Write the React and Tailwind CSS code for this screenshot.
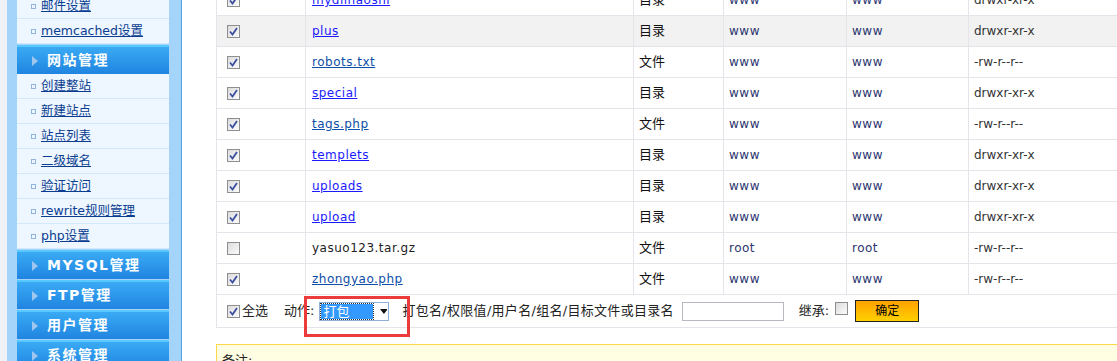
import React from 'react';

const cjk = { fontFamily: '"DejaVu Sans", "Noto Sans CJK SC", sans-serif' };

const Check = ({ checked = true }) => (
  <span className="inline-flex w-[13px] h-[13px] border border-[#8e8f8f] bg-gradient-to-br from-[#dcdcdc] to-[#fbfbfb] items-center justify-center shrink-0">
    {checked && (
      <svg width="9" height="9" viewBox="0 0 9 9">
        <path d="M1 4.5 L3.5 7.5 L8 1" fill="none" stroke="#3b4f9e" strokeWidth="1.8" />
      </svg>
    )}
  </span>
);

const SideItem = ({ label }) => (
  <div className="h-[25px] bg-[#eef6ff] border-b border-[#d4e8fc] flex items-center pl-[14px]">
    <span className="w-[5px] h-[5px] border border-[#8fb4e0] mr-[5px]" />
    <a href="#" className="text-[12.5px] text-[#0a3d8f] underline leading-none">{label}</a>
  </div>
);

const SideHead = ({ label }) => (
  <div className="mt-[1px] h-[29px] border-t-2 border-[#58c8ff] bg-gradient-to-b from-[#3aaaf4] to-[#2084e0] flex items-center pl-[15px]">
    <svg width="6" height="10" viewBox="0 0 6 10" className="mr-[9px]">
      <path d="M0 0 L6 5 L0 10 Z" fill="#9fc6ee" />
    </svg>
    <span className="text-white font-bold text-[14px] tracking-[1.5px]">{label}</span>
  </div>
);

const rows = [
  { name: 'mydiinaosni', type: '目录', u: 'www', g: 'www', p: 'drwxr-xr-x', dir: true },
  { name: 'plus', type: '目录', u: 'www', g: 'www', p: 'drwxr-xr-x', dir: true, hover: true },
  { name: 'robots.txt', type: '文件', u: 'www', g: 'www', p: '-rw-r--r--' },
  { name: 'special', type: '目录', u: 'www', g: 'www', p: 'drwxr-xr-x', dir: true },
  { name: 'tags.php', type: '文件', u: 'www', g: 'www', p: '-rw-r--r--' },
  { name: 'templets', type: '目录', u: 'www', g: 'www', p: 'drwxr-xr-x', dir: true },
  { name: 'uploads', type: '目录', u: 'www', g: 'www', p: 'drwxr-xr-x', dir: true },
  { name: 'upload', type: '目录', u: 'www', g: 'www', p: 'drwxr-xr-x', dir: true },
  { name: 'yasuo123.tar.gz', type: '文件', u: 'root', g: 'root', p: '-rw-r--r--', plain: true },
  { name: 'zhongyao.php', type: '文件', u: 'www', g: 'www', p: '-rw-r--r--' },
];

const cell = 'border-r border-[#e4e4ea] flex items-center';

export default function App() {
  return (
    <div className="flex h-[361px] w-[1117px] overflow-hidden bg-white text-[12px] text-[#222]" style={cjk}>
      {/* Sidebar */}
      <div className="w-[7px] shrink-0 bg-[#eef2f6]" />
      <div className="w-[175px] shrink-0 bg-[#a4d4fa] border-r border-[#4ea4e4] pl-[10px] pr-[12px]">
        <div className="-mt-[6px]">
          <SideItem label="邮件设置" />
          <SideItem label="memcached设置" />
          <SideHead label="网站管理" />
          {['创建整站', '新建站点', '站点列表', '二级域名', '验证访问', 'rewrite规则管理', 'php设置'].map((l) => (
            <SideItem key={l} label={l} />
          ))}
          <SideHead label="MYSQL管理" />
          <SideHead label="FTP管理" />
          <SideHead label="用户管理" />
          <SideHead label="系统管理" />
        </div>
      </div>

      {/* Main */}
      <div className="flex-1 pl-[34px]">
        <div className="w-[920px] -mt-[15px] border-l border-[#e4e4ea]">
          {rows.map((r) => (
            <div
              key={r.name}
              className={`grid grid-cols-[89px_328px_90px_123px_122px_1fr] h-[31px] border-b border-[#e4e4ea] ${r.hover ? 'bg-[#f2f2f2]' : ''}`}
            >
              <div className={`${cell} pl-[10px]`}>
                <Check checked={!r.plain} />
              </div>
              <div className={`${cell} pl-[6px] tracking-[0.5px]`}>
                {r.plain ? (
                  <span className="text-[#222]">{r.name}</span>
                ) : (
                  <a href="#" className={`underline ${r.dir ? 'text-[#1a1aff]' : 'text-[#0c4ea8]'}`}>{r.name}</a>
                )}
              </div>
              <div className={`${cell} pl-[5px] text-[13px] text-[#111]`}>{r.type}</div>
              <div className={`${cell} pl-[5px] text-[#2c3570] tracking-[0.5px]`}>{r.u}</div>
              <div className={`${cell} pl-[5px] text-[#2c3570] tracking-[0.5px]`}>{r.g}</div>
              <div className="flex items-center pl-[5px] text-[#333]">{r.p}</div>
            </div>
          ))}

          {/* Footer actions */}
          <div className="relative h-[33px] border-b border-[#e4e4ea] flex items-center pl-[10px] text-[13px]">
            <Check />
            <span className="ml-[2px]">全选</span>
            <span className="ml-[16px]">动作:</span>
            <div className="ml-[5px] w-[70px] h-[19px] border border-[#8fb0d8] bg-white flex items-center px-[1px]">
              <span className="w-[52px] h-[15px] bg-[#3399ff] text-white outline-1 outline-dotted outline-[#333] leading-[15px] pl-[2px]">打包</span>
              <svg width="8" height="5" viewBox="0 0 8 5" className="ml-[7px]">
                <path d="M0 0 L8 0 L4 5 Z" fill="#111" />
              </svg>
            </div>
            <span className="ml-[13px] tracking-[0.3px]">打包名/权限值/用户名/组名/目标文件或目录名</span>
            <input className="ml-[8px] w-[102px] h-[19px] border border-[#b8b8c0] bg-white" />
            <span className="ml-[15px]">继承:</span>
            <span className="ml-[6px]">
              <Check checked={false} />
            </span>
            <button className="ml-[7px] w-[64px] h-[22px] border border-[#222] bg-gradient-to-b from-[#ffa200] to-[#ffd000] text-[12px] text-black">
              确定
            </button>
            <div className="absolute left-[87px] top-[1px] w-[106px] h-[41px] border-[3px] border-[#ec3b3b]" />
          </div>
        </div>

        <div className="w-[920px] mt-[16px] h-[40px] border border-[#ffd84a] bg-[#fffde2] pl-[5px] pt-[6px] text-[13px]">备注:</div>
      </div>
    </div>
  );
}
